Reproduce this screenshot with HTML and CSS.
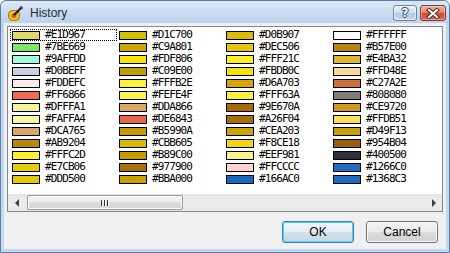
FILE: index.html
```html
<!DOCTYPE html>
<html>
<head>
<meta charset="utf-8">
<title>History</title>
<link rel="stylesheet" href="styles.css">
</head>
<body>
<div class="window">
  <div class="titlebar">
    <svg class="app-icon" width="16" height="16" viewBox="0 0 16 16">
      <rect x="1.5" y="5.5" width="11" height="10" rx="4" fill="#f2c51e" stroke="#a0700c"/>
      <circle cx="7" cy="10.5" r="2.6" fill="#e2601c"/>
      <path d="M7.5 9.5 L14.5 2.5" stroke="#1e1e1e" stroke-width="2.2" stroke-linecap="round"/>
      <path d="M13 1.5 L15.5 4" stroke="#555" stroke-width="1.5"/>
    </svg>
    <span class="title">History</span>
    <div class="caption-buttons">
      <div class="cap help"><span class="q">?</span></div>
      <div class="cap close">
        <svg width="14" height="11" viewBox="0 0 14 11">
          <path d="M3 2 L11 9 M11 2 L3 9" stroke="#4a2a22" stroke-width="4" stroke-linecap="square"/>
          <path d="M3 2 L11 9 M11 2 L3 9" stroke="#ffffff" stroke-width="2" stroke-linecap="square"/>
        </svg>
      </div>
    </div>
  </div>
  <div class="client">
    <div class="listbox">
      <div class="items">
        <div class="item focus"><span class="sw" style="background:#E1D967"></span><span class="hex">#E1D967</span></div>
        <div class="item"><span class="sw" style="background:#7BE669"></span><span class="hex">#7BE669</span></div>
        <div class="item"><span class="sw" style="background:#9AFFDD"></span><span class="hex">#9AFFDD</span></div>
        <div class="item"><span class="sw" style="background:#C9D0E2"></span><span class="hex">#D0BEFF</span></div>
        <div class="item"><span class="sw" style="background:#FCEBEC"></span><span class="hex">#FDDEFC</span></div>
        <div class="item"><span class="sw" style="background:#F06A55"></span><span class="hex">#FF6866</span></div>
        <div class="item"><span class="sw" style="background:#F3F59A"></span><span class="hex">#DFFFA1</span></div>
        <div class="item"><span class="sw" style="background:#F7F7A6"></span><span class="hex">#FAFFA4</span></div>
        <div class="item"><span class="sw" style="background:#DCA570"></span><span class="hex">#DCA765</span></div>
        <div class="item"><span class="sw" style="background:#B8860E"></span><span class="hex">#AB9204</span></div>
        <div class="item"><span class="sw" style="background:#FFF22D"></span><span class="hex">#FFFC2D</span></div>
        <div class="item"><span class="sw" style="background:#E7CB06"></span><span class="hex">#E7CB06</span></div>
        <div class="item"><span class="sw" style="background:#E3C80A"></span><span class="hex">#DDD500</span></div>

        <div class="item"><span class="sw" style="background:#D1C000"></span><span class="hex">#D1C700</span></div>
        <div class="item"><span class="sw" style="background:#C9A801"></span><span class="hex">#C9A801</span></div>
        <div class="item"><span class="sw" style="background:#F8E406"></span><span class="hex">#FDF806</span></div>
        <div class="item"><span class="sw" style="background:#C09E00"></span><span class="hex">#C09E00</span></div>
        <div class="item"><span class="sw" style="background:#FFF33A"></span><span class="hex">#FFFB2E</span></div>
        <div class="item"><span class="sw" style="background:#FEF24F"></span><span class="hex">#FEFE4F</span></div>
        <div class="item"><span class="sw" style="background:#DDA866"></span><span class="hex">#DDA866</span></div>
        <div class="item"><span class="sw" style="background:#E8644A"></span><span class="hex">#DE6843</span></div>
        <div class="item"><span class="sw" style="background:#C49A0A"></span><span class="hex">#B5990A</span></div>
        <div class="item"><span class="sw" style="background:#D6B805"></span><span class="hex">#CBB605</span></div>
        <div class="item"><span class="sw" style="background:#C69C00"></span><span class="hex">#B89C00</span></div>
        <div class="item"><span class="sw" style="background:#A86F0A"></span><span class="hex">#977900</span></div>
        <div class="item"><span class="sw" style="background:#C8A000"></span><span class="hex">#BBA000</span></div>

        <div class="item"><span class="sw" style="background:#D8BC07"></span><span class="hex">#D0B907</span></div>
        <div class="item"><span class="sw" style="background:#E6C506"></span><span class="hex">#DEC506</span></div>
        <div class="item"><span class="sw" style="background:#FFEE22"></span><span class="hex">#FFF21C</span></div>
        <div class="item"><span class="sw" style="background:#F8DF0C"></span><span class="hex">#FBDB0C</span></div>
        <div class="item"><span class="sw" style="background:#D6A703"></span><span class="hex">#D6A703</span></div>
        <div class="item"><span class="sw" style="background:#FFF03C"></span><span class="hex">#FFF63A</span></div>
        <div class="item"><span class="sw" style="background:#A8690A"></span><span class="hex">#9E670A</span></div>
        <div class="item"><span class="sw" style="background:#AA6E06"></span><span class="hex">#A26F04</span></div>
        <div class="item"><span class="sw" style="background:#CEA203"></span><span class="hex">#CEA203</span></div>
        <div class="item"><span class="sw" style="background:#F6D418"></span><span class="hex">#F8CE18</span></div>
        <div class="item"><span class="sw" style="background:#F6F48A"></span><span class="hex">#EEF981</span></div>
        <div class="item"><span class="sw" style="background:#FFD2D2"></span><span class="hex">#FFCCCC</span></div>
        <div class="item"><span class="sw" style="background:#166AC0"></span><span class="hex">#166AC0</span></div>

        <div class="item"><span class="sw" style="background:#FFFFFF"></span><span class="hex">#FFFFFF</span></div>
        <div class="item"><span class="sw" style="background:#B8860E"></span><span class="hex">#B57E00</span></div>
        <div class="item"><span class="sw" style="background:#E0B830"></span><span class="hex">#E4BA32</span></div>
        <div class="item"><span class="sw" style="background:#FCD898"></span><span class="hex">#FFD48E</span></div>
        <div class="item"><span class="sw" style="background:#CF7038"></span><span class="hex">#C27A2E</span></div>
        <div class="item"><span class="sw" style="background:#7E7E82"></span><span class="hex">#808080</span></div>
        <div class="item"><span class="sw" style="background:#CF9A1E"></span><span class="hex">#CE9720</span></div>
        <div class="item"><span class="sw" style="background:#FDE054"></span><span class="hex">#FFDB51</span></div>
        <div class="item"><span class="sw" style="background:#C8A00A"></span><span class="hex">#D49F13</span></div>
        <div class="item"><span class="sw" style="background:#9A5E10"></span><span class="hex">#954B04</span></div>
        <div class="item"><span class="sw" style="background:#2E2E3C"></span><span class="hex">#400500</span></div>
        <div class="item"><span class="sw" style="background:#1E6CC4"></span><span class="hex">#1266C0</span></div>
        <div class="item"><span class="sw" style="background:#1E6CC4"></span><span class="hex">#1368C3</span></div>
      </div>
      <div class="hscroll">
        <div class="arrow left"><span class="tri-left"></span></div>
        <div class="track">
          <div class="thumb"><span class="grip"></span><span class="grip"></span><span class="grip"></span></div>
        </div>
        <div class="arrow right"><span class="tri-right"></span></div>
      </div>
    </div>
    <div class="buttons">
      <button class="btn default">OK</button>
      <button class="btn">Cancel</button>
    </div>
  </div>
</div>
</body>
</html>
```
FILE: styles.css
```css
* { box-sizing: border-box; }

html, body {
  margin: 0;
  padding: 0;
  width: 450px;
  height: 253px;
  overflow: hidden;
  background: #ffffff;
  font-family: "Liberation Sans", Arial, sans-serif;
}

.window {
  width: 450px;
  height: 253px;
  border: 1px solid #5d7ca3;
  border-radius: 6px 6px 0 0;
  background: linear-gradient(#dce8f6 0, #c8dbf1 12px, #bdd2ec 22px, #c3d7ef 40px, #c3d7ef 100%);
  padding: 0 3px 3px 3px;
  display: flex;
  flex-direction: column;
}

.titlebar {
  height: 22px;
  display: flex;
  align-items: center;
}

.app-icon {
  margin-left: 3px;
  margin-top: 1px;
  flex: none;
}

.title {
  margin-left: 7px;
  font-size: 12px;
  color: #1e2a3a;
  margin-top: 1px;
}

.caption-buttons {
  margin-left: auto;
  align-self: flex-start;
  margin-top: 4px;
  display: flex;
  gap: 3px;
}

.cap {
  height: 16px;
  border-radius: 3px;
  display: flex;
  align-items: center;
  justify-content: center;
}

.help {
  width: 24px;
  border: 1px solid #6a84a8;
  background: linear-gradient(#e6eef8 0, #d3e0f0 45%, #b4c9e3 50%, #c6d7ec 100%);
  box-shadow: inset 0 0 0 1px rgba(255,255,255,0.6);
}

.q {
  font-family: "DejaVu Sans", sans-serif;
  font-weight: bold;
  font-size: 12px;
  line-height: 12px;
  color: #ffffff;
  text-shadow: 1px 0 0 #2d3f5a, -1px 0 0 #2d3f5a, 0 1px 0 #2d3f5a, 0 -1px 0 #2d3f5a;
}

.close {
  width: 26px;
  border: 1px solid #7a3a2c;
  background: linear-gradient(#eeb0a2 0, #e28c76 45%, #cf4b30 50%, #d9674c 100%);
  box-shadow: inset 0 0 0 1px rgba(255,220,210,0.5);
}

.client {
  flex: 1;
  background: #f0f0f0;
  padding: 3px 3px 0 3px;
  display: flex;
  flex-direction: column;
}

.listbox {
  height: 186px;
  border: 1px solid #828790;
  background: #ffffff;
  display: flex;
  flex-direction: column;
}

.items {
  flex: 1;
  padding: 2px 0 0 2px;
  display: grid;
  grid-auto-flow: column;
  grid-template-rows: repeat(13, 12px);
  grid-auto-columns: 107px;
  overflow: hidden;
}

.item {
  height: 12px;
  display: flex;
  align-items: center;
  border: 1px solid transparent;
}

.item.focus {
  border: 1px dotted #000000;
}

.sw {
  width: 28px;
  height: 9px;
  margin-left: 1px;
  border: 1px solid #000000;
  flex: none;
}

.hex {
  margin-left: 5px;
  font-family: "DejaVu Sans Mono", monospace;
  font-size: 11px;
  letter-spacing: -0.9px;
  line-height: 10px;
  color: #000000;
}

.hscroll {
  height: 17px;
  display: flex;
  background: linear-gradient(#e3e3e3, #ececec 30%, #ececec 70%, #e6e6e6);
}

.arrow {
  width: 17px;
  height: 17px;
  display: flex;
  align-items: center;
  justify-content: center;
  flex: none;
}

.tri-left {
  width: 0;
  height: 0;
  border-top: 4px solid transparent;
  border-bottom: 4px solid transparent;
  border-right: 4px solid #3f3f3f;
}

.tri-right {
  width: 0;
  height: 0;
  border-top: 4px solid transparent;
  border-bottom: 4px solid transparent;
  border-left: 4px solid #3f3f3f;
}

.track {
  flex: 1;
  padding: 1px 0 1px 2px;
  display: flex;
}

.thumb {
  width: 156px;
  height: 15px;
  border: 1px solid #9a9a9a;
  border-radius: 2px;
  background: linear-gradient(#f6f6f6 0, #ececec 45%, #dcdcdc 50%, #d6d6d6 100%);
  box-shadow: inset 0 0 0 1px #fbfbfb;
  display: flex;
  align-items: center;
  justify-content: center;
  gap: 1px;
}

.grip {
  width: 1px;
  height: 6px;
  background: #333333;
  box-shadow: 1px 0 0 #ffffff;
  margin-right: 1px;
}

.buttons {
  display: flex;
  justify-content: flex-end;
  gap: 12px;
  padding: 9px 5px 0 0;
}

.btn {
  width: 72px;
  height: 22px;
  border: 1px solid #707070;
  border-radius: 3px;
  background: linear-gradient(#f2f2f2 0, #ebebeb 50%, #dddddd 51%, #cfcfcf 100%);
  box-shadow: inset 0 0 0 1px #fcfcfc;
  font-family: "Liberation Sans", Arial, sans-serif;
  font-size: 12px;
  color: #000000;
  padding: 0;
}

.btn.default {
  border-color: #3c7fb1;
  box-shadow: inset 0 0 0 1px #48d6f8;
  background: linear-gradient(#f0f6fa 0, #e4eef4 50%, #d4e2ea 51%, #c8d8e2 100%);
}
```
